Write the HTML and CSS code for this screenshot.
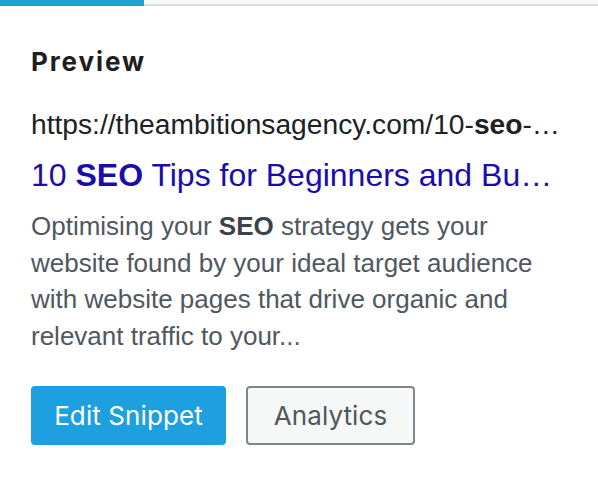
FILE: index.html
```html
<!DOCTYPE html>
<html lang="en">
<head>
<meta charset="utf-8">
<title>Preview</title>
<link rel="stylesheet" href="styles.css">
</head>
<body>
<div class="tabs">
  <div class="tab tab-active"></div>
</div>
<section class="panel">
  <h2 class="panel-title">Preview</h2>
  <div class="snippet">
    <div class="snippet-url">https://theambitionsagency.com/10-<b>seo</b>-tips-for-beginners-and-business-owners/</div>
    <div class="snippet-title">10 <b>SEO</b> Tips for Beginners and Business Owners</div>
    <p class="snippet-desc">Optimising your <b>SEO</b> strategy gets your website found by your ideal target audience with website pages that drive organic and relevant traffic to your...</p>
  </div>
  <div class="actions">
    <button class="btn btn-primary" type="button">Edit Snippet</button>
    <button class="btn btn-secondary" type="button">Analytics</button>
  </div>
</section>
</body>
</html>
```

FILE: styles.css
```css
html, body {
  margin: 0;
  padding: 0;
  background: #ffffff;
}

body {
  font-family: "Liberation Sans", Arial, sans-serif;
}

.tabs {
  display: flex;
  height: 4px;
  background: #f6f7f7;
  border-bottom: 2px solid #dcdcde;
}

.tab-active {
  width: 144px;
  height: 6px;
  background: #1ba3d3;
}

.panel {
  padding: 41px 34px 0 31px;
}

.panel-title {
  margin: 0;
  font-family: Inter, "Noto Sans", sans-serif;
  font-size: 26px;
  line-height: 30px;
  font-weight: 700;
  letter-spacing: 1.9px;
  color: #1e1e1e;
}

.snippet {
  margin-top: 28.5px;
}

.snippet-url {
  font-size: 28.2px;
  line-height: 36px;
  color: #202124;
  white-space: nowrap;
  overflow: hidden;
  text-overflow: ellipsis;
}

.snippet-title {
  margin-top: 13.5px;
  font-size: 32px;
  line-height: 40px;
  color: #1a0dab;
  white-space: nowrap;
  overflow: hidden;
  text-overflow: ellipsis;
}

.snippet-desc {
  margin: 13px 0 0;
  font-size: 26px;
  line-height: 36.5px;
  color: #50575e;
}

.snippet-desc b {
  color: #3c434a;
}

.actions {
  display: flex;
  gap: 20px;
  margin-top: 32px;
}

.btn {
  box-sizing: border-box;
  height: 59px;
  padding: 0;
  border-radius: 4px;
  font-family: Inter, "Noto Sans", sans-serif;
  font-size: 26px;
  font-weight: 400;
  letter-spacing: 0.1px;
  display: flex;
  align-items: center;
  justify-content: center;
}

.btn-primary {
  width: 195px;
  background: #1e9fe0;
  border: 2px solid #1e9fe0;
  color: #ffffff;
}

.btn-secondary {
  width: 169px;
  background: #f6f7f7;
  border: 2px solid #80868c;
  color: #50575e;
}
```
